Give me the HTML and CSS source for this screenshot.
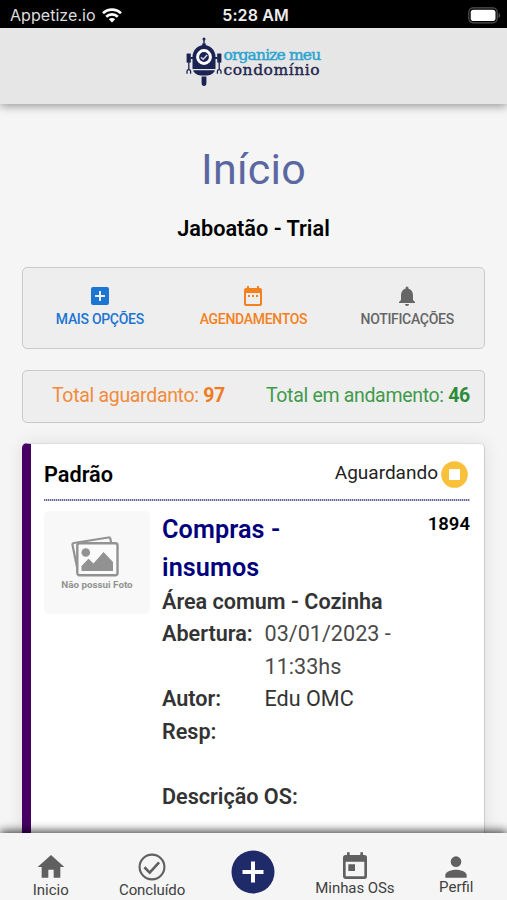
FILE: index.html
```html
<!DOCTYPE html>
<html lang="pt-BR">
<head>
<meta charset="utf-8">
<title>Organize meu condomínio</title>
<link rel="stylesheet" href="styles.css">
</head>
<body>
<div class="app">
  <div class="status">
    <div class="carrier"><span>Appetize.io</span>
      <svg width="20" height="15" viewBox="0 0 20 15" fill="none" stroke="#fff" stroke-width="2.7"><path d="M1 5.3a13 13 0 0 1 18 0M4.2 8.7a8.4 8.4 0 0 1 11.6 0"/><path d="M10 14.4 6.8 11.3a4.6 4.6 0 0 1 6.4 0z" fill="#fff" stroke="none"/></svg>
    </div>
    <div class="clock">5:28 AM</div>
    <svg class="battery" width="33" height="17" viewBox="0 0 33 17"><rect x=".8" y=".8" width="28.4" height="15" rx="4.5" fill="none" stroke="#555" stroke-width="1.2"/><rect x="2.7" y="2.7" width="24.8" height="11.4" rx="2.8" fill="#fff"/><path d="M30.6 6v5q1.5-.6 1.5-2.5T30.6 6" fill="#555"/></svg>
  </div>
  <header class="header">
    <svg class="robot" width="36" height="50" viewBox="0 0 36 50" fill="#1b2352">
      <circle cx="18" cy="2" r="1.5"/><path d="M17.3 2h1.4v4.5h1.1V9h-3.6V6.500h1.100z"/>
      <path d="M6.500 32V20a11.500 12 0 0 1 23 0v12z"/><path d="M7 33.200h22q-1.500 4.600-8 5.200h-6q-6.500-.6-8-5.200z"/>
      <path d="M15.600 39.600h4.800V46q0 3-2.400 3t-2.400-3z"/>
      <rect x=".6" y="16.500" width="4.200" height="9.300" rx=".7"/><rect x="31.200" y="16.500" width="4.200" height="9.300" rx=".7"/>
      <path d="M4.500 20h2.500v2h-2.500zM29 20h2.500v2H29z"/>
      <path d="M2.800 25.500v7M1 36.800v-2.600q0-1.600 1.800-1.600t1.800 1.600v2.600M33.200 25.500v7M31.400 36.800v-2.600q0-1.600 1.800-1.600t1.800 1.600v2.600" fill="none" stroke="#1b2352" stroke-width="1.300"/>
      <circle cx="18" cy="20" r="6.400" stroke="#fff" stroke-width="3"/><path d="m14.900 20.200 2.200 2 4.100-4.200" fill="none" stroke="#d5d9e8" stroke-width="1.400"/>
    </svg>
    <div class="brand"><span class="brand-top">organize meu</span><span class="brand-bottom">condomínio</span></div>
  </header>
  <main class="main">
    <h1>Início</h1>
    <h2>Jaboatão - Trial</h2>
    <section class="panel actions">
      <div class="action blue"><svg width="24" height="24" viewBox="0 0 24 24" fill="currentColor"><path d="M19 3H5a2 2 0 0 0-2 2v14c0 1.100.9 2 2 2h14a2 2 0 0 0 2-2V5a2 2 0 0 0-2-2zm-2 10h-4v4h-2v-4H7v-2h4V7h2v4h4v2z"/></svg><span>MAIS OPÇÕES</span></div>
      <div class="action orange"><svg width="24" height="24" viewBox="0 0 24 24" fill="currentColor"><path d="M9 11H7v2h2v-2zm4 0h-2v2h2v-2zm4 0h-2v2h2v-2zm2-7h-1V2h-2v2H8V2H6v2H5a2 2 0 0 0-2 2v14c0 1.100.9 2 2 2h14a2 2 0 0 0 2-2V6a2 2 0 0 0-2-2zm0 16H5V9h14v11z"/></svg><span>AGENDAMENTOS</span></div>
      <div class="action gray"><svg width="24" height="24" viewBox="0 0 24 24" fill="currentColor"><path d="M12 22c1.100 0 2-.9 2-2h-4a2 2 0 0 0 2 2zm6-6v-5c0-3.070-1.640-5.640-4.500-6.320V4a1.500 1.500 0 0 0-3 0v.68C7.630 5.360 6 7.920 6 11v5l-2 2v1h16v-1l-2-2z"/></svg><span>NOTIFICAÇÕES</span></div>
    </section>
    <section class="panel totals">
      <div class="waiting">Total aguardanto: <b>97</b></div>
      <div class="running">Total em andamento: <b>46</b></div>
    </section>
    <article class="card">
      <div class="card-head">
        <strong>Padrão</strong>
        <div class="state"><span>Aguardando</span><svg width="27" height="27" viewBox="0 0 27 27"><circle cx="13.500" cy="13.500" r="13.300" fill="#f9c03a"/><rect x="8" y="8" width="11" height="11" rx=".8" fill="#fff"/></svg></div>
      </div>
      <div class="card-body">
        <div class="photo">
          <svg width="50" height="42" viewBox="0 0 50 42"><path d="M8.500 38.500 2.500 9q-.3-1.600 1.300-2L38.500 1.500q1.500-.2 1.900 1.300L41 6.500" fill="none" stroke="#929292" stroke-width="2.200"/><rect x="7.300" y="7.300" width="40.200" height="32" rx="2.200" fill="#fafafa" stroke="#929292" stroke-width="2.400"/><circle cx="15.800" cy="16.500" r="4.300" fill="#929292"/><path d="M11.500 35v-5l7-7.200 5 4.700L33.500 16 43 26v9z" fill="#929292"/></svg>
          <span>Não possui Foto</span>
        </div>
        <div class="details">
          <h3>Compras -<br>insumos</h3>
          <div class="place">Área comum - Cozinha</div>
          <dl>
            <dt>Abertura:</dt><dd class="date">03/01/2023 -<br>11:33hs</dd>
            <dt>Autor:</dt><dd>Edu OMC</dd>
            <dt>Resp:</dt><dd></dd>
          </dl>
          <div class="description">Descrição OS:</div>
        </div>
        <div class="number">1894</div>
      </div>
    </article>
  </main>
  <nav class="nav">
    <div class="tab home"><svg width="32" height="32" viewBox="0 0 24 24" fill="currentColor"><path d="M10 20v-6h4v6h5v-8h3L12 3 2 12h3v8z"/></svg><span>Inicio</span></div>
    <div class="tab done"><svg width="32" height="32" viewBox="0 0 24 24" fill="none" stroke="currentColor" stroke-width="1.600"><circle cx="12" cy="12" r="9.300"/><path d="m6.300 12.200 4 4 7-7.600" stroke-width="2"/></svg><span>Concluído</span></div>
    <div class="tab add"><svg width="44" height="44" viewBox="0 0 44 44"><circle cx="22" cy="22" r="21.500" fill="#1f2b68"/><path d="M22 11.500v21M11.500 22h21" stroke="#fff" stroke-width="4"/></svg></div>
    <div class="tab orders"><svg width="32" height="32" viewBox="0 0 24 24" fill="currentColor"><path d="M19 3h-1V1h-2v2H8V1H6v2H5a2 2 0 0 0-2 2v14c0 1.100.9 2 2 2h14a2 2 0 0 0 2-2V5a2 2 0 0 0-2-2zm0 16H5V8h14v11zM7 10h5v5H7z"/></svg><span>Minhas OSs</span></div>
    <div class="tab profile"><svg width="32" height="32" viewBox="0 0 24 24" fill="currentColor"><path d="M12 12a4 4 0 1 0 0-8 4 4 0 0 0 0 8zm0 2c-2.670 0-8 1.340-8 4v2h16v-2c0-2.660-5.330-4-8-4z"/></svg><span>Perfil</span></div>
  </nav>
</div>
</body>
</html>
```
FILE: styles.css
```css
* { box-sizing: border-box; }
body { margin: 0; font-family: Roboto, "Liberation Sans", sans-serif; color: #000; }
h1, h2, h3, dl, dd { margin: 0; }
svg { display: block; flex: none; }
.app { width: 507px; height: 900px; display: flex; flex-direction: column; overflow: hidden; background: #f5f5f5; }
.status { flex: none; height: 28px; background: #000; color: #fff; display: grid; grid-template-columns: 1fr auto 1fr; align-items: center; padding: 2px 6px 0 10px; font-family: Inter, sans-serif; }
.carrier { display: flex; align-items: center; gap: 6px; font-size: 16px; letter-spacing: 0.05px; color: #ddd; }
.clock { font-size: 16px; font-weight: 600; letter-spacing: 0.1px; color: #eee; }
.battery { justify-self: end; }
.header { flex: none; height: 76px; background: #e6e6e6; display: flex; justify-content: center; padding-top: 9px; gap: 2px; position: relative; z-index: 1; box-shadow: 0 2px 9px rgba(0, 0, 0, 0.4); }
.brand { display: flex; flex-direction: column; padding-top: 9px; width: 98px; font-family: "DejaVu Serif", serif; font-size: 15.500px; white-space: nowrap; }
.brand-top { color: #2da4d0; line-height: 18px; letter-spacing: -0.850px; -webkit-text-stroke: 0.500px #2da4d0; }
.brand-bottom { color: #252650; line-height: 13px; letter-spacing: 0.550px; -webkit-text-stroke: 0.400px #252650; }
.main { flex: 1; min-height: 0; padding: 40px 22px 0; overflow: hidden; }
h1 { font-size: 43px; line-height: 50px; font-weight: 400; color: #5b67a0; text-align: center; letter-spacing: 0.200px; }
h2 { font-size: 21.700px; line-height: 30px; font-weight: 600; text-align: center; margin-top: 20px; }
.panel { border: 1.500px solid #cacaca; border-radius: 5px; background: #eee; }
.actions { height: 82px; margin-top: 23px; display: grid; grid-template-columns: repeat(3, 1fr); padding-top: 16px; }
.action { display: flex; flex-direction: column; align-items: center; font-size: 14px; letter-spacing: -0.300px; line-height: 20px; font-weight: 500; gap: 1px; }
.blue { color: #1c75d3; }
.orange { color: #f48120; }
.gray { color: #666; }
.totals { height: 53px; margin-top: 21px; display: flex; align-items: center; justify-content: space-between; padding: 0 14px 2px 29px; font-size: 19.500px; letter-spacing: -0.320px; }
.waiting { color: #f28b3c; }
.waiting b { color: #f17b1e; }
.running { color: #3f9a4b; }
.running b { color: #2e8b3a; }
.card { margin-top: 20px; height: 480px; background: #fff; border-left: 9px solid #460063; border-right: 1px solid #ccc; border-top: 1px solid #ddd; border-radius: 5px; padding: 0 14px 0 13px; box-shadow: 0 0 18px rgba(0, 0, 0, 0.09); }
.card-head { height: 57px; display: flex; align-items: center; justify-content: space-between; padding: 3px 2px 0 0; background: repeating-linear-gradient(90deg, #66669a 0 1px, #c4c4da 1px 2px) bottom / 100% 2px no-repeat; font-size: 21.700px; }
.card-head strong { font-weight: 600; }
.state { display: flex; align-items: center; gap: 3px; font-size: 19px; color: #222; }
.state span { padding-bottom: 4px; }
.card-body { display: flex; padding-top: 10px; }
.photo { flex: none; width: 106px; height: 103px; border-radius: 5px; background: #f8f8f8; display: flex; flex-direction: column; align-items: center; padding-top: 25px; font-size: 9.800px; font-weight: 700; line-height: 14px; color: #929292; }
.photo svg { margin-right: 5px; }
.details { flex: 1; margin-left: 12px; color: #333; font-size: 21.600px; line-height: 32.400px; }
h3 { font-size: 25.200px; line-height: 37.500px; font-weight: 600; color: #00007d; letter-spacing: 0.100px; }
.place, dt, .description { font-weight: 600; }
dl { display: grid; grid-template-columns: 102.500px 1fr; }
.date { color: #4a4a4a; }
.description { margin-top: 33px; }
.number { font-size: 18.500px; line-height: 27px; font-weight: 600; }
.nav { flex: none; height: 67px; background: #f5f5f5; position: relative; z-index: 1; box-shadow: 0 -2px 9px rgba(0, 0, 0, 0.75); display: grid; grid-template-columns: repeat(5, 1fr); }
.tab { display: flex; flex-direction: column; align-items: center; color: #606060; font-size: 15px; line-height: 18px; white-space: nowrap; }
.tab span { color: #404040; }
.home { padding-top: 18px; }
.home span { margin-top: -2px; }
.done { padding-top: 18px; }
.done span { margin-top: -2px; letter-spacing: -0.100px; }
.add { padding-top: 17px; }
.orders { padding-top: 18px; }
.orders span { margin-top: -4px; letter-spacing: -0.080px; }
.profile { padding-top: 18px; }
.profile span { margin-top: -5px; }
```
